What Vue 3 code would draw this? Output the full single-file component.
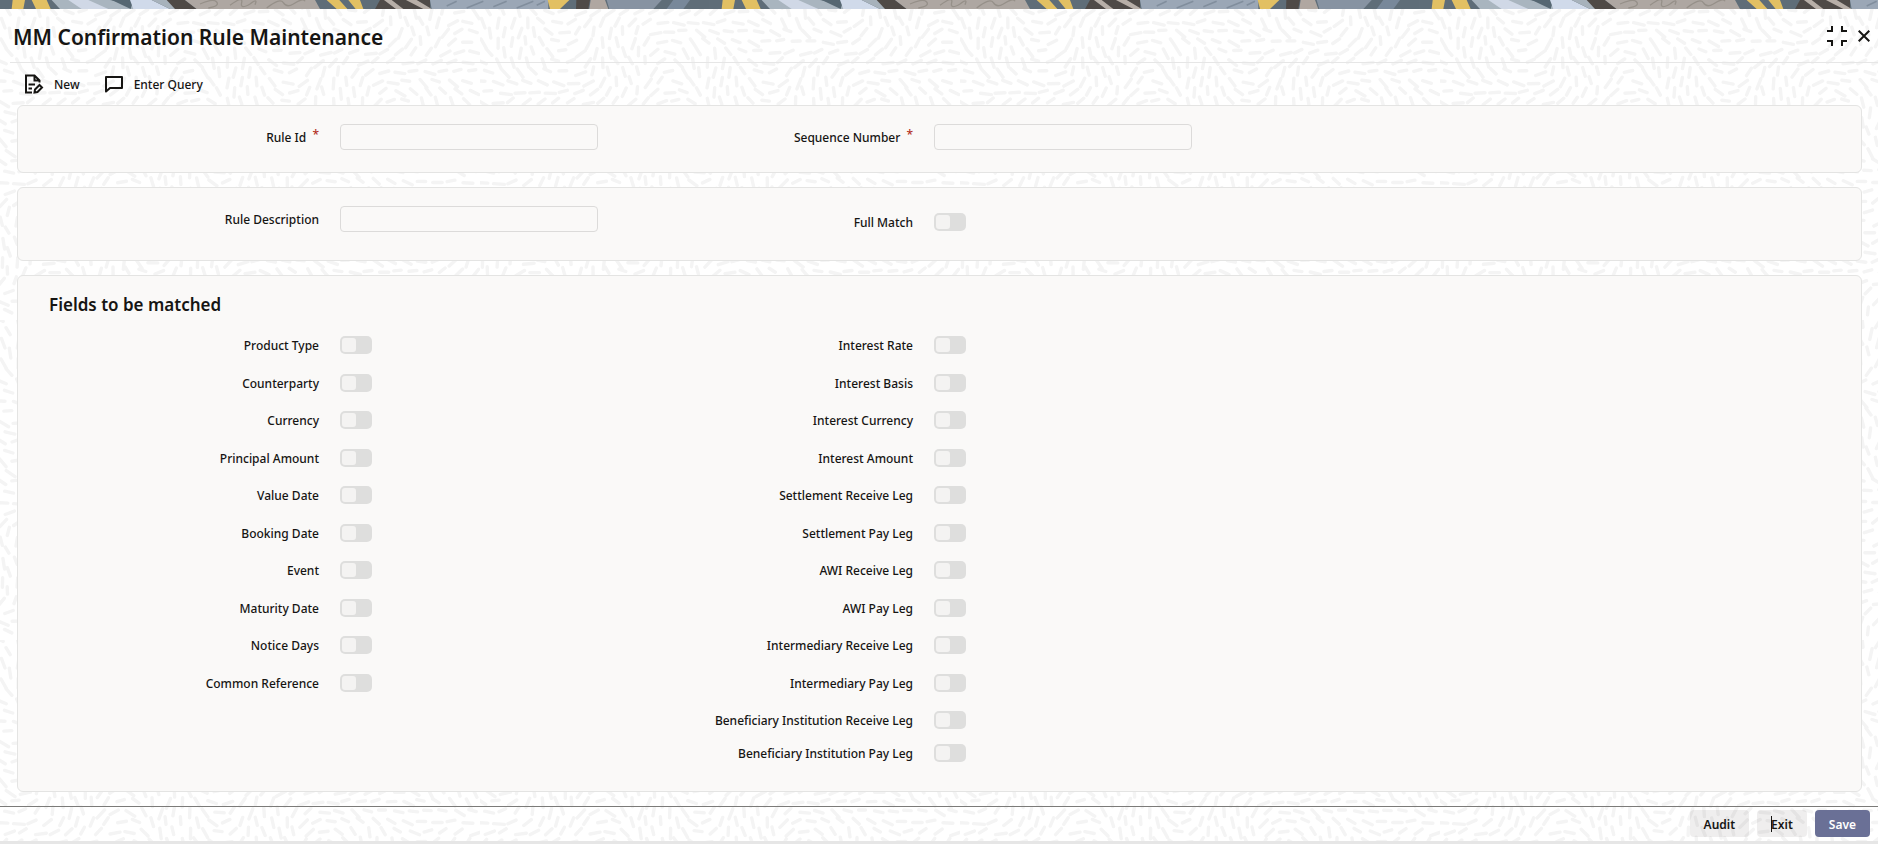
<script setup>
const leftFields = [
  'Product Type', 'Counterparty', 'Currency', 'Principal Amount', 'Value Date',
  'Booking Date', 'Event', 'Maturity Date', 'Notice Days', 'Common Reference',
]
const rightFields = [
  'Interest Rate', 'Interest Basis', 'Interest Currency', 'Interest Amount',
  'Settlement Receive Leg', 'Settlement Pay Leg', 'AWI Receive Leg', 'AWI Pay Leg',
  'Intermediary Receive Leg', 'Intermediary Pay Leg',
  'Beneficiary Institution Receive Leg', 'Beneficiary Institution Pay Leg',
]
const columns = [leftFields, rightFields]
const idFor = (label) => label.toLowerCase().replace(/\s+/g, '-')

// Short strokes that follow a smooth direction field, repeating every tile.
const tileW = 480
const tileH = 320
function buildStrokes() {
  const t = Math.PI * 2
  const parts = []
  const stepX = 15
  const stepY = 10
  for (let row = 0; row < tileH / stepY; row++) {
    for (let col = 0; col < tileW / stepX; col++) {
      const seed = Math.sin(row * 127.1 + col * 311.7) * 43758.5
      const r = seed - Math.floor(seed)
      const x = col * stepX + (row % 2) * 7 + r * 4
      const y = row * stepY + r * 4
      const u = x / tileW
      const v = y / tileH
      const a = -0.4 + 1.1 * Math.sin(t * (2 * u + v)) + 0.8 * Math.cos(t * (3 * u - 2 * v)) + r * 0.6
      const len = 3.5 + r * 2
      const dx = Math.cos(a) * len
      const dy = Math.sin(a) * len
      parts.push(`M${(x - dx).toFixed(1)} ${(y - dy).toFixed(1)}L${(x + dx).toFixed(1)} ${(y + dy).toFixed(1)}`)
    }
  }
  return parts.join('')
}
const strokes = buildStrokes()
</script>

<template>
  <main class="screen">
    <svg class="texture" aria-hidden="true">
      <defs>
        <pattern id="strokes" :width="tileW" :height="tileH" patternUnits="userSpaceOnUse">
          <path :d="strokes" fill="none" stroke="#f4f4f4" stroke-width="3.4" stroke-linecap="round" />
        </pattern>
      </defs>
      <rect width="100%" height="100%" fill="url(#strokes)" />
    </svg>

    <svg class="banner" aria-hidden="true">
      <defs>
        <pattern id="collage" width="710" height="9" patternUnits="userSpaceOnUse">
          <g transform="scale(.33333)">
            <rect width="2130" height="27" fill="#5f6d78" />
            <path fill="#e2c063" d="M38 0H75L70 27H35ZM95 0H140L152 27H108Z" />
            <path fill="#a9b5bf" d="M155 0H330L450 27H180Z" />
            <path fill="#d0d8e6" d="M205 0H265L325 27H245Z" />
            <path fill="#566772" d="M335 0H400L392 27Z" />
            <path fill="#d0daea" d="M390 0H455L510 27H400Z" />
            <path fill="#a7b2bb" d="M455 0H505L530 27H510Z" />
            <path fill="#4f4a46" d="M500 0H555L590 27H525Z" />
            <path fill="#aea7a2" d="M555 0H945L960 27H590Z" />
            <path d="M600 12Q640-6 650 6T625 24M690 16Q730-14 725 8T750 12Q775-8 765 14M800 24Q840-8 850 8T880 12Q910-8 915 4" fill="none" stroke="#969089" stroke-width="4" />
            <path fill="#e2c063" d="M980 0H1018L1042 27H1010ZM1045 0H1080L1090 27H1067Z" />
            <path fill="#4f4a47" d="M1140 0H1290V27H1125Z" />
            <path fill="#b8afa8" d="M1152 0H1175L1210 27H1188ZM1218 0H1250L1295 27H1270Z" />
            <path fill="#9ba7b6" d="M1290 0H1645V27H1295Z" />
            <path d="M1340 18l30-14M1400 24l50-20M1480 20l40-16M1550 24l50-20M1610 16l25-12" stroke="#818e9d" stroke-width="5" />
            <path fill="#e2c063" d="M1643 0H1708L1680 27H1650Z" />
            <path fill="#4f4a47" d="M1729 0H1770L1765 27H1728Z" />
            <path fill="#b0a7a1" d="M1772 0H1815L1825 27H1768Z" />
            <path fill="#8793a2" d="M1820 0H1985L1960 27H1828Z" />
            <path fill="#78889a" d="M2020 0H2070L2050 27H2000Z" />
          </g>
        </pattern>
      </defs>
      <rect width="100%" height="9" fill="url(#collage)" />
    </svg>

    <header class="titlebar">
      <h1>MM Confirmation Rule Maintenance</h1>
      <div class="window-actions">
        <button type="button" aria-label="Restore size">
          <svg width="20" height="20" viewBox="0 0 20 20" fill="none" stroke="#161513" stroke-width="2">
            <path d="M0 5H5V0M20 5H15V0M0 15H5V20M20 15H15V20" />
          </svg>
        </button>
        <button type="button" aria-label="Close">
          <svg width="12" height="12" viewBox="0 0 12 12" fill="none" stroke="#161513" stroke-width="2">
            <path d="M.7.7L11.3 11.3M11.3.7L.7 11.3" />
          </svg>
        </button>
      </div>
    </header>

    <nav class="toolbar">
      <button type="button">
        <svg width="20" height="20" viewBox="0 0 20 20" fill="none" stroke="#161513" stroke-width="2">
          <path d="M8 18.500H2V1.500H10.500L15.500 6.500V8.500M10.500 1.500V6.500H15.500M4.500 10.500H11M4.500 14.500H8" />
          <path d="M10.500 18.500L11 15.500L15.500 11L18 13.500L13.500 18Z" />
        </svg>
        <span>New</span>
      </button>
      <button type="button">
        <svg width="20" height="20" viewBox="0 0 20 20" fill="none" stroke="#161513" stroke-width="2">
          <path d="M2 3H18V14H6L2 17.500Z" stroke-linejoin="round" />
        </svg>
        <span>Enter Query</span>
      </button>
    </nav>

    <section class="panel keys">
      <div class="field">
        <label for="rule-id">Rule Id <sup>*</sup></label>
        <input id="rule-id" class="text" type="text" required>
      </div>
      <div class="field">
        <label for="sequence-number">Sequence Number <sup>*</sup></label>
        <input id="sequence-number" class="text" type="text" required>
      </div>
    </section>

    <section class="panel details">
      <div class="field">
        <label for="rule-description">Rule Description</label>
        <input id="rule-description" class="text" type="text">
      </div>
      <div class="field toggle-field">
        <label for="full-match">Full Match</label>
        <input id="full-match" class="switch" type="checkbox" role="switch">
      </div>
    </section>

    <section class="panel matching">
      <h2>Fields to be matched</h2>
      <div class="columns">
        <div v-for="(fields, i) in columns" :key="i" class="rows">
          <div v-for="label in fields" :key="label" class="field">
            <label :for="idFor(label)">{{ label }}</label>
            <input :id="idFor(label)" class="switch" type="checkbox" role="switch">
          </div>
        </div>
      </div>
    </section>

    <footer class="actions">
      <button type="button">Audit</button>
      <button type="button" class="exit">Exit</button>
      <button type="button" class="save">Save</button>
    </footer>
  </main>
</template>

<style>
body {
  margin: 0;
  background: #fff;
}
</style>

<style scoped>
.screen {
  position: relative;
  isolation: isolate;
  display: flex;
  flex-direction: column;
  box-sizing: border-box;
  min-height: 100vh;
  border-bottom: 3px solid #e6e6e6;
  color: #161513;
  font: 500 12px/16px "Noto Sans", "Open Sans", sans-serif;
}
.texture {
  position: absolute;
  inset: 0;
  z-index: -1;
  width: 100%;
  height: 100%;
}
.banner {
  display: block;
  width: 100%;
  height: 9px;
}
button {
  font: inherit;
  color: inherit;
  border: 0;
  background: none;
  padding: 0;
}
.titlebar {
  display: flex;
  align-items: center;
  justify-content: space-between;
  height: 53px;
  margin-left: 10px;
  padding: 0 8px 0 3px;
  border-bottom: 1px solid #e6e6e6;
}
h1 {
  margin: 0;
  padding-top: 2px;
  font-size: 21px;
  line-height: 28px;
  font-weight: 600;
}
.window-actions {
  display: flex;
  align-items: center;
  gap: 11px;
}
.window-actions svg,
.toolbar svg {
  display: block;
}
.toolbar {
  display: flex;
  align-items: center;
  gap: 24px;
  height: 42px;
  padding: 0 24px;
}
.toolbar button {
  display: flex;
  align-items: center;
  gap: 10px;
}
.toolbar span,
.field label {
  padding-top: 2px;
}
.panel {
  box-sizing: border-box;
  margin: 0 16px 14px 17px;
  padding: 0 31px 0 30px;
  border: 1px solid #e4e4e3;
  border-radius: 6px;
  background: #faf9f8;
}
.keys,
.details,
.columns {
  display: grid;
  grid-template-columns: repeat(3, 1fr);
}
.keys {
  padding-top: 18px;
  padding-bottom: 22px;
}
.details {
  padding-top: 18px;
  padding-bottom: 28px;
}
.toggle-field {
  padding-top: 6px;
}
.field {
  display: grid;
  grid-template-columns: 271fr 258fr 23fr;
  column-gap: 21px;
  align-items: center;
}
.field label {
  text-align: right;
  white-space: nowrap;
}
sup {
  margin-left: 3px;
  color: #b3311f;
  font-size: 12px;
  line-height: 0;
  vertical-align: 3px;
}
.text {
  box-sizing: border-box;
  width: 100%;
  height: 26px;
  margin: 0;
  padding: 0 8px;
  border: 1px solid #dcdbda;
  border-radius: 4px;
  background: transparent;
  font: inherit;
}
.switch {
  appearance: none;
  box-sizing: border-box;
  width: 32px;
  height: 18px;
  margin: 0;
  padding: 2px;
  border-radius: 5px;
  background: #dededd;
}
.switch::before {
  content: "";
  display: block;
  width: 14px;
  height: 14px;
  border-radius: 3px;
  background: #f4f3f2;
}
.matching {
  padding-top: 15px;
  padding-bottom: 24px;
}
h2 {
  margin: 0 0 7px 1px;
  font-size: 17px;
  line-height: 28px;
  font-weight: 600;
}
.rows {
  display: grid;
  grid-template-rows: repeat(5, 38px 37px) 38px 28px;
}
.actions {
  display: flex;
  justify-content: flex-end;
  gap: 8px;
  margin-top: auto;
  padding: 3px 8px 4px;
  border-top: 1px solid #7c7b79;
}
.actions button {
  position: relative;
  height: 27px;
  padding: 2px 14px 0;
  border-radius: 4px;
  background: rgba(22, 21, 19, 0.07);
  font-weight: 600;
}
.exit::before {
  content: "";
  position: absolute;
  left: 14px;
  top: 6px;
  width: 1px;
  height: 16px;
  background: #161513;
}
.actions .save {
  background: #6a7096;
  color: #fff;
}
</style>
